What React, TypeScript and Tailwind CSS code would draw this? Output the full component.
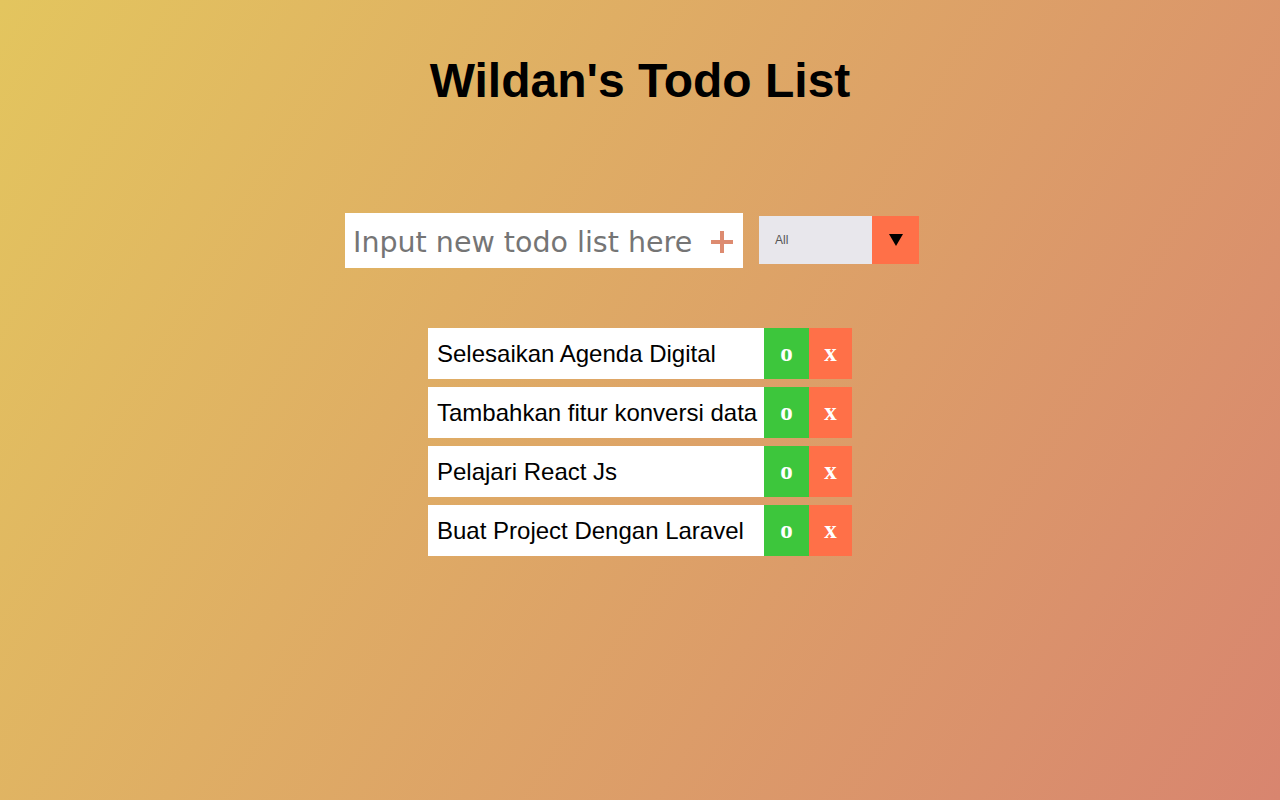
import { useState } from "react";

type Todo = {
  id: number;
  text: string;
  done: boolean;
};

const initialTodos: Todo[] = [
  { id: 1, text: "Selesaikan Agenda Digital", done: false },
  { id: 2, text: "Tambahkan fitur konversi data", done: false },
  { id: 3, text: "Pelajari React Js", done: false },
  { id: 4, text: "Buat Project Dengan Laravel", done: false },
];

function TodoItem({ todo }: { todo: Todo }) {
  return (
    <li className="flex h-[51px] w-[424px]">
      <div className="flex flex-1 items-center bg-white pl-[9px] text-[24px] text-black">
        {todo.text}
      </div>
      {/* complete / delete */}
      <button className="flex w-[45px] items-center justify-center bg-[#3dc63c] pb-[2px] font-['Liberation_Serif',serif] text-[25px] font-bold text-white">
        o
      </button>
      <button className="flex w-[43px] items-center justify-center bg-[#ff7048] pb-[2px] font-['Liberation_Serif',serif] text-[25px] font-bold text-white">
        x
      </button>
    </li>
  );
}

export default function App() {
  const [todos] = useState<Todo[]>(initialTodos);
  const [input, setInput] = useState("");

  return (
    <div className="flex min-h-screen w-full flex-col items-center bg-linear-[120deg] from-[#e3c55e] to-[#d8856f] font-['Liberation_Sans',Arial,sans-serif]">
      <header className="pt-[57px]">
        <h1 className="text-[48px] font-bold leading-none text-black">Wildan's Todo List</h1>
      </header>

      <form
        className="mt-[108px] flex items-start gap-4 pr-4"
        onSubmit={(e) => e.preventDefault()}
      >
        <div className="flex h-[55px] w-[398px] items-center bg-white">
          <input
            value={input}
            onChange={(e) => setInput(e.target.value)}
            placeholder="Input new todo list here"
            className="h-full min-w-0 flex-1 pl-[8px] pt-[3px] font-['DejaVu_Sans',sans-serif] text-[28.5px] text-black outline-none placeholder:text-[#757575]"
          />
          <button type="submit" className="mr-[10px] mt-[2px] flex h-[22px] w-[22px] items-center justify-center">
            <svg width="22" height="22" viewBox="0 0 22 22">
              <path d="M11 0v22M0 11h22" stroke="#dd8b70" strokeWidth="4" />
            </svg>
          </button>
        </div>

        <div className="mt-[3px] flex h-[48px] w-[160px]">
          <div className="flex flex-1 items-center bg-[#e8e7ec] pl-[16px] text-[12px] text-[#555]">
            All
          </div>
          <div className="flex w-[47px] items-center justify-center bg-[#ff7048]">
            <svg width="14" height="12" viewBox="0 0 14 12">
              <path d="M0 0h14L7 12z" fill="#000" />
            </svg>
          </div>
        </div>
      </form>

      <ul className="mt-[60px] flex flex-col gap-2">
        {todos.map((todo) => (
          <TodoItem key={todo.id} todo={todo} />
        ))}
      </ul>
    </div>
  );
}
